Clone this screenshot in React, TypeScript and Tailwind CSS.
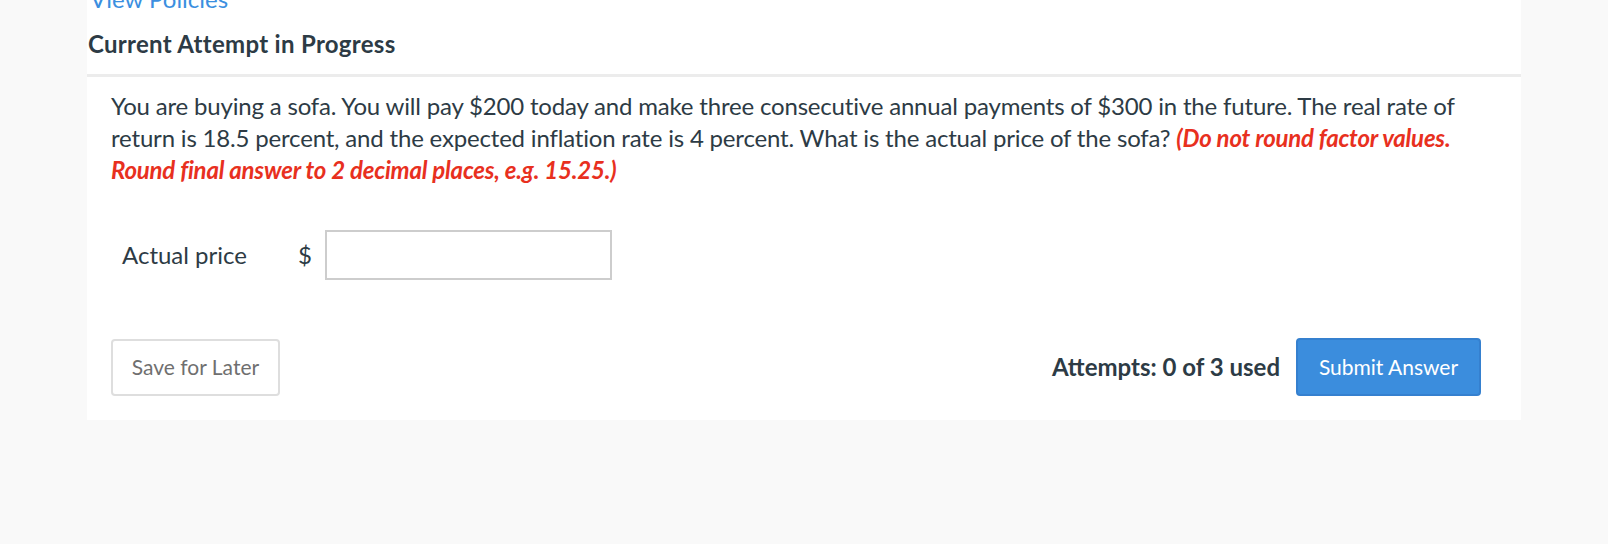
export default function App() {
  return (
    <div className="min-h-[544px] w-full overflow-hidden bg-[#f9f9f9] font-['Lato','Liberation_Sans',sans-serif] text-[#2d3b45]">
      <div className="ml-[87px] w-[1434px] bg-white">
        <div className="-mt-[14px] pl-[3px] text-[24px] leading-[26px] text-[#3b8fe0]">
          View Policies
        </div>
        <h2 className="pt-[18px] pl-[1px] text-[24px] font-bold leading-[28px] tracking-[0.3px]">
          Current Attempt in Progress
        </h2>
        <div className="mt-[16px] h-[3px] bg-[#ececec]" />

        <div className="px-[24px] pt-[13px] pb-[24px]">
          <p className="text-[24px] leading-[32px] tracking-[-0.18px]">
            You are buying a sofa. You will pay $200 today and make three consecutive annual payments of $300 in the
            future. The real rate of return is 18.5 percent, and the expected inflation rate is 4 percent. What is the
            actual price of the sofa?{" "}
            <span className="font-bold italic tracking-[-0.2px] text-[#e8301e]">
              (Do not round factor values. Round final answer to 2 decimal places, e.g. 15.25.)
            </span>
          </p>

          <div className="mt-[44px] ml-[11px] flex items-center">
            <label className="w-[176px] text-[24px] leading-[28px]">Actual price</label>
            <span className="w-[27px] text-[24px] leading-[28px]">$</span>
            <input
              type="text"
              className="h-[50px] w-[287px] border-2 border-[#cdcdcd] bg-white px-2 text-[20px] outline-none"
            />
          </div>

          <div className="mt-[58px] flex items-center justify-between pr-[16px]">
            <button className="h-[57px] w-[169px] rounded-[4px] border-2 border-[#dedede] bg-white text-[21px] text-[#6f6f6f]">
              Save for Later
            </button>
            <div className="flex items-center gap-[16px]">
              <span className="text-[24px] font-bold leading-[28px]">Attempts: 0 of 3 used</span>
              <button className="h-[58px] w-[185px] rounded-[4px] border-2 border-[#3580cf] bg-[#3b8ddd] text-[21px] text-white">
                Submit Answer
              </button>
            </div>
          </div>
        </div>
      </div>
    </div>
  );
}
